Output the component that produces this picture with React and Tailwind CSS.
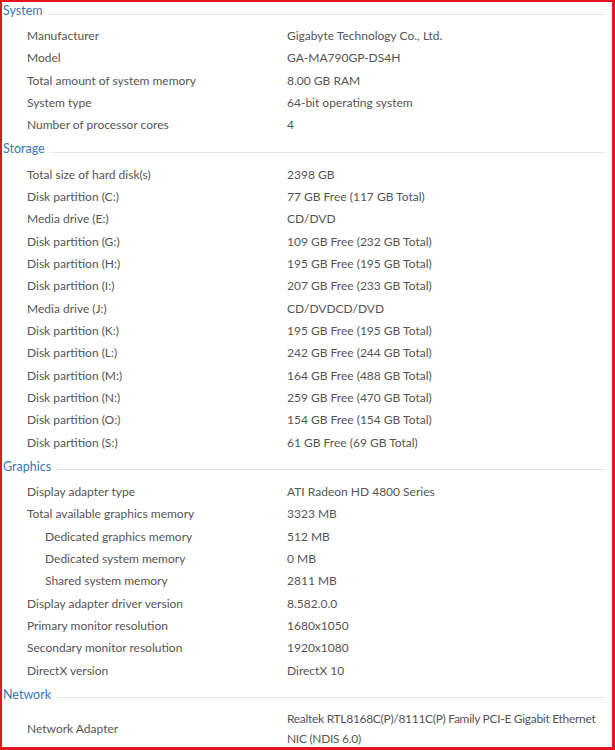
const sections = [
  {
    title: "System",
    rows: [
      ["Manufacturer", "Gigabyte Technology Co., Ltd."],
      ["Model", "GA-MA790GP-DS4H"],
      ["Total amount of system memory", "8.00 GB RAM"],
      ["System type", "64-bit operating system"],
      ["Number of processor cores", "4"],
    ],
  },
  {
    title: "Storage",
    rows: [
      ["Total size of hard disk(s)", "2398 GB"],
      ["Disk partition (C:)", "77 GB Free (117 GB Total)"],
      ["Media drive (E:)", "CD/DVD"],
      ["Disk partition (G:)", "109 GB Free (232 GB Total)"],
      ["Disk partition (H:)", "195 GB Free (195 GB Total)"],
      ["Disk partition (I:)", "207 GB Free (233 GB Total)"],
      ["Media drive (J:)", "CD/DVDCD/DVD"],
      ["Disk partition (K:)", "195 GB Free (195 GB Total)"],
      ["Disk partition (L:)", "242 GB Free (244 GB Total)"],
      ["Disk partition (M:)", "164 GB Free (488 GB Total)"],
      ["Disk partition (N:)", "259 GB Free (470 GB Total)"],
      ["Disk partition (O:)", "154 GB Free (154 GB Total)"],
      ["Disk partition (S:)", "61 GB Free (69 GB Total)"],
    ],
  },
  {
    title: "Graphics",
    rows: [
      ["Display adapter type", "ATI Radeon HD 4800 Series"],
      ["Total available graphics memory", "3323 MB"],
      ["Dedicated graphics memory", "512 MB", true],
      ["Dedicated system memory", "0 MB", true],
      ["Shared system memory", "2811 MB", true],
      ["Display adapter driver version", "8.582.0.0"],
      ["Primary monitor resolution", "1680x1050"],
      ["Secondary monitor resolution", "1920x1080"],
      ["DirectX version", "DirectX 10"],
    ],
  },
];

function Header({ title, first }) {
  return (
    <div className={`flex items-center h-4 mb-[6px] ${first ? "mt-px" : "mt-[5px]"}`}>
      <span className="text-[#3577b3] text-[12.5px] pl-px">{title}</span>
      <div className="flex-1 h-px bg-[#e3e3e3] ml-[5px] mr-[7px] mt-[6px]" />
    </div>
  );
}

function Row({ label, value, indent }) {
  return (
    <div className="flex h-[22.33px] items-center">
      <div className={`w-[285px] shrink-0 ${indent ? "pl-[43px]" : "pl-[25px]"}`}>{label}</div>
      <div className="whitespace-nowrap">{value}</div>
    </div>
  );
}

export default function App() {
  return (
    <div
      className="w-[615px] h-[750px] overflow-hidden bg-white border-[#e5161d] border-t-2 border-l-2 border-r-[3px] border-b-[3px] text-[12px] text-[#555] leading-none"
      style={{ fontFamily: 'Lato, "Open Sans", sans-serif' }}
    >
      {sections.map((s, i) => (
        <div key={s.title}>
          <Header title={s.title} first={i === 0} />
          {s.rows.map(([l, v, ind]) => (
            <Row key={l} label={l} value={v} indent={ind} />
          ))}
        </div>
      ))}
      <Header title="Network" />
      <div className="flex h-10 items-center">
        <div className="w-[285px] shrink-0 pl-[25px]">Network Adapter</div>
        <div className="leading-5 whitespace-nowrap tracking-[-0.3px]">
          Realtek RTL8168C(P)/8111C(P) Family PCI-E Gigabit Ethernet
          <br />
          NIC (NDIS 6.0)
        </div>
      </div>
    </div>
  );
}
